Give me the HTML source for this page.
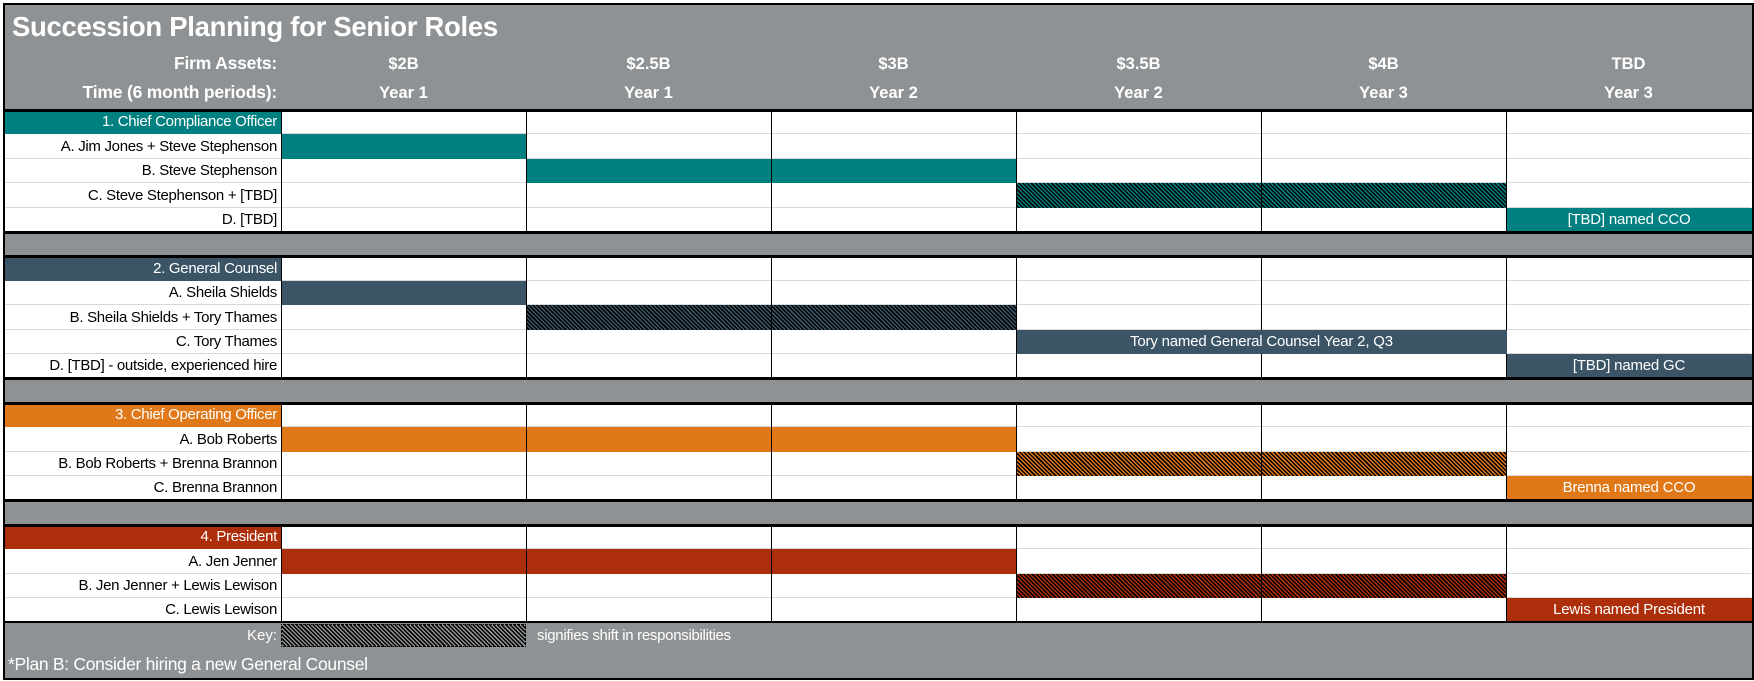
<!DOCTYPE html>
<html><head><meta charset="utf-8"><style>
*{margin:0;padding:0;box-sizing:border-box}
body{width:1754px;height:681px;background:#fff;position:relative;overflow:hidden;font-family:"Liberation Sans",sans-serif;color:#000}
.a{position:absolute}
.lbl{position:absolute;left:5px;width:276px;text-align:right;padding-right:4px;font-size:15px;white-space:nowrap;letter-spacing:-0.3px}
.bar{position:absolute;color:#fff;font-size:15px;text-align:center;white-space:nowrap;letter-spacing:-0.2px}
.hdr{position:absolute;color:#fff;font-weight:bold;font-size:16.5px;text-align:center;width:245px}
</style></head><body>
<script>
const R=document.body;
function d(s,h){const e=document.createElement('div');e.className='a';e.style.cssText=s;if(h!==undefined)e.innerHTML=h;R.appendChild(e);return e;}
const top0=110,rh=24.4;
const cols=[281,526,771,1016,1261,1506,1751];
d('left:3px;top:3px;width:1751px;height:107px;background:#8f9294');
d('left:12px;top:11px;color:#fff;font-weight:bold;font-size:27.5px;letter-spacing:-0.3px;white-space:nowrap','Succession Planning for Senior Roles');
d('left:5px;top:53px;width:272px;text-align:right;color:#fff;font-weight:bold;font-size:17.5px;letter-spacing:-0.2px','Firm Assets:');
d('left:5px;top:82px;width:272px;text-align:right;color:#fff;font-weight:bold;font-size:17.5px;letter-spacing:-0.2px','Time (6 month periods):');
const assets=['$2B','$2.5B','$3B','$3.5B','$4B','TBD'],yrs=['Year 1','Year 1','Year 2','Year 2','Year 3','Year 3'];
for(let i=0;i<6;i++){const e=d('top:55px;left:'+cols[i]+'px',assets[i]);e.className='hdr';const f=d('top:84px;left:'+cols[i]+'px',yrs[i]);f.className='hdr';}
const T='#008080',S='#3b5566',O='#e07818',Rr='#ad2e0a';
const rows=[
 ['1. Chief Compliance Officer',T],['A. Jim Jones + Steve Stephenson'],['B. Steve Stephenson'],['C. Steve Stephenson + [TBD]'],['D. [TBD]'],['GRAY'],
 ['2. General Counsel',S],['A. Sheila Shields'],['B. Sheila Shields + Tory Thames'],['C. Tory Thames'],['D. [TBD] - outside, experienced hire'],['GRAY'],
 ['3. Chief Operating Officer',O],['A. Bob Roberts'],['B. Bob Roberts + Brenna Brannon'],['C. Brenna Brannon'],['GRAY'],
 ['4. President',Rr],['A. Jen Jenner'],['B. Jen Jenner + Lewis Lewison'],['C. Lewis Lewison']
];
function ry(i){return Math.round(top0+rh*i);}
rows.forEach((r,i)=>{
 const y=ry(i),h=ry(i+1)-y;
 if(r[0]==='GRAY'){d('left:3px;top:'+y+'px;width:1751px;height:'+h+'px;background:#8f9294');return;}
 d('left:5px;top:'+y+'px;width:1746px;height:'+h+'px;border-bottom:1px solid #d9d9d9');
 const l=d('top:'+y+'px;height:'+h+'px;line-height:'+h+'px',r[0]);l.className='lbl';
 if(r[1]){l.style.background=r[1];l.style.color='#fff';}
});
function hatch(c){return 'repeating-linear-gradient(45deg,'+c+' 0 1.45px,#000 1.45px 2.9px)';}
const late=[];
function bar(row,c0,c1,bg,txt,h){
 const y=ry(row),hh=ry(row+1)-y;
 const s='left:'+cols[c0]+'px;top:'+y+'px;width:'+(cols[c1+1]-cols[c0])+'px;height:'+hh+'px;line-height:'+hh+'px;background:'+(h?hatch(bg):bg);
 if(txt){late.push([s,txt]);return;}
 d(s).className='bar';
}
bar(1,0,0,T);bar(2,1,2,T);bar(3,3,4,T,'',1);bar(4,5,5,T,'[TBD] named CCO');
bar(7,0,0,S);bar(8,1,2,S,'',1);bar(9,3,4,S,'Tory named General Counsel Year 2, Q3');bar(10,5,5,S,'[TBD] named GC');
bar(13,0,2,O);bar(14,3,4,O,'',1);bar(15,5,5,O,'Brenna named CCO');
bar(18,0,2,Rr);bar(19,3,4,Rr,'',1);bar(20,5,5,Rr,'Lewis named President');
[[0,5],[6,11],[12,16],[17,21]].forEach(([a,b])=>{
 const y=ry(a),y2=ry(b);
 for(let i=0;i<6;i++)d('left:'+(cols[i]-0.5)+'px;top:'+y+'px;width:1px;height:'+(y2-y)+'px;background:#000');
});
late.forEach(([s,t])=>{const e=d(s,t);e.className='bar';e.style.left=(parseFloat(e.style.left)+0.5)+'px';});
[[0,5],[6,11],[12,16],[17,21]].forEach(([a,b])=>{
 const y=ry(a),y2=ry(b);
 d('left:3px;top:'+(y-1.5)+'px;width:1751px;height:3px;background:#000');
 d('left:3px;top:'+(y2-1.5)+'px;width:1751px;height:3px;background:#000');
});
const ky=ry(21);
d('left:3px;top:'+(ky+1)+'px;width:1751px;height:'+(679-ky)+'px;background:#8f9294');
d('left:5px;top:'+(ky+5)+'px;width:272px;text-align:right;color:#fff;font-size:15px','Key:');
d('left:'+cols[0]+'px;top:'+(ky+2)+'px;width:245px;height:23px;border:1px dotted #000;background:'+hatch('#8f9294'));
d('left:'+(cols[1]+11)+'px;top:'+(ky+5)+'px;color:#fff;font-size:15px;letter-spacing:-0.3px','signifies shift in responsibilities');
d('left:8px;top:654px;color:#fff;font-size:17.5px;letter-spacing:-0.3px','*Plan B: Consider hiring a new General Counsel');
d('left:3px;top:3px;width:1751px;height:677px;border:2.5px solid #000');
d('left:0;top:0;width:1754px;height:3px;background:#fff');
</script>
</body></html>
